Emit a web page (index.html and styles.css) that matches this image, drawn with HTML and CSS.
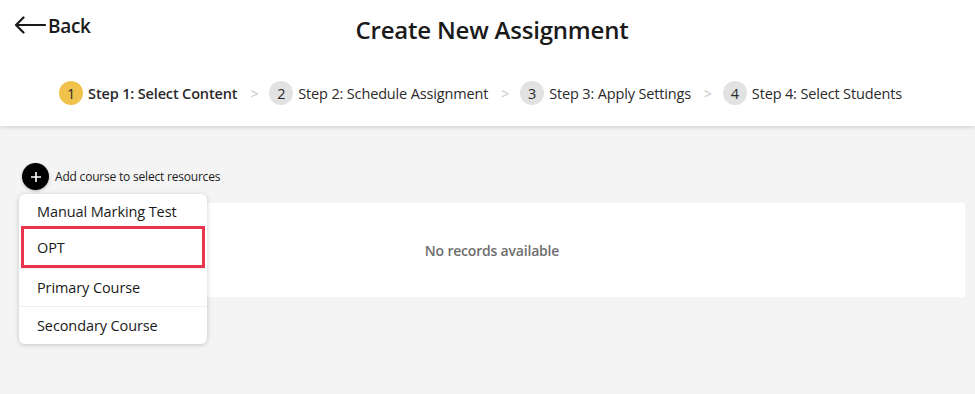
FILE: index.html
```html
<!DOCTYPE html>
<html lang="en">
<head>
<meta charset="utf-8">
<title>Create New Assignment</title>
<link rel="stylesheet" href="styles.css">
</head>
<body>
<header class="header">
  <div class="top-row">
    <a class="back" href="#">
      <svg class="back-icon" width="32" height="18" viewBox="0 0 32 18" fill="none" stroke="#1a1a1a" stroke-width="2.2" stroke-linecap="round" stroke-linejoin="round"><path d="M31 9H2M9.5 1.5L2 9l7.5 7.5"/></svg>
      <span>Back</span>
    </a>
    <h1 class="title">Create New Assignment</h1>
  </div>
  <nav class="steps">
    <div class="step active"><span class="num">1</span><span class="label">Step 1: Select Content</span></div>
    <span class="sep">&gt;</span>
    <div class="step"><span class="num">2</span><span class="label">Step 2: Schedule Assignment</span></div>
    <span class="sep">&gt;</span>
    <div class="step"><span class="num">3</span><span class="label">Step 3: Apply Settings</span></div>
    <span class="sep">&gt;</span>
    <div class="step"><span class="num">4</span><span class="label">Step 4: Select Students</span></div>
  </nav>
</header>
<main class="main">
  <div class="add-row">
    <button class="add-btn" type="button">
      <svg width="12" height="12" viewBox="0 0 12 12" stroke="#fff" stroke-width="1.6"><path d="M6 1v10M1 6h10"/></svg>
    </button>
    <span class="add-label">Add course to select resources</span>
  </div>
  <div class="content">
    <div class="card">No records available</div>
    <ul class="menu">
      <li class="item">Manual Marking Test</li>
      <li class="item selected">OPT</li>
      <li class="item">Primary Course</li>
      <li class="item">Secondary Course</li>
    </ul>
  </div>
</main>
</body>
</html>
```

FILE: styles.css
```css
* { box-sizing: border-box; }
html, body { margin: 0; padding: 0; }
body {
  font-family: "Open Sans", "Noto Sans", sans-serif;
  color: #1a1a1a;
  background: #f4f4f4;
  height: 394px;
  overflow: hidden;
}
.header {
  background: #fff;
  height: 126px;
  box-shadow: 0 2px 4px rgba(0,0,0,0.12);
  position: relative;
  z-index: 1;
  padding-top: 13px;
}
.top-row {
  display: grid;
  grid-template-columns: 1fr auto 1fr;
  align-items: start;
  height: 60px;
}
.back {
  display: flex;
  align-items: center;
  gap: 2px;
  padding-left: 14px;
  color: #1a1a1a;
  text-decoration: none;
  font-weight: 600;
  font-size: 19px;
  letter-spacing: -0.3px;
  height: 26px;
}
.back-icon { margin-top: -2px; }
.title {
  grid-column: 2;
  margin: 1px 0 0 9px;
  font-size: 24px;
  font-weight: 600;
  letter-spacing: -0.2px;
  line-height: 32px;
}
.steps {
  display: flex;
  justify-content: center;
  align-items: center;
  gap: 10px;
  margin-top: 8px;
  padding-right: 14px;
  font-size: 14.5px;
  letter-spacing: -0.15px;
}
.step {
  display: flex;
  align-items: center;
  gap: 5px;
  color: #2a2a2a;
}
.num {
  width: 24px;
  height: 24px;
  border-radius: 50%;
  background: #e2e2e2;
  display: flex;
  align-items: center;
  justify-content: center;
  font-size: 14.5px;
}
.step.active .num { background: #f0c24b; }
.step.active .label { font-weight: 600; }
.sep {
  color: #c8c8c8;
  font-size: 14px;
  margin: 0 1px 0 3px;
}
.main {
  padding: 37px 10px 0 19px;
}
.add-row {
  display: flex;
  align-items: center;
  gap: 6px;
  padding-left: 3px;
  height: 27px;
}
.add-btn {
  width: 27px;
  height: 27px;
  border-radius: 50%;
  background: #000;
  border: 0;
  padding: 0;
  display: flex;
  align-items: center;
  justify-content: center;
  box-shadow: 0 1px 3px rgba(0,0,0,0.25);
}
.add-label {
  font-size: 12px;
  letter-spacing: -0.2px;
  color: #1a1a1a;
}
.content {
  position: relative;
  margin-top: 13px;
}
.card {
  background: #fff;
  height: 94px;
  display: flex;
  align-items: center;
  justify-content: center;
  font-size: 14px;
  font-weight: 600;
  color: #6e6e6e;
  letter-spacing: -0.2px;
}
.menu {
  position: absolute;
  left: 0;
  top: -9px;
  width: 188px;
  margin: 0;
  padding: 0;
  list-style: none;
  background: #fff;
  border-radius: 6px;
  box-shadow: 0 1px 5px rgba(0,0,0,0.2);
  z-index: 2;
}
.item {
  height: 38px;
  display: flex;
  align-items: center;
  padding-left: 18px;
  font-size: 14.5px;
  font-weight: 500;
  letter-spacing: -0.1px;
  color: #1a1a1a;
  border-top: 1px solid #efefef;
}
.item:first-child { border-top: 0; height: 32px; padding-top: 2px; }
.item.selected {
  height: 42px;
  margin: 0 2px;
  padding-left: 13px;
  border: 3px solid #e8344f;
}
```
